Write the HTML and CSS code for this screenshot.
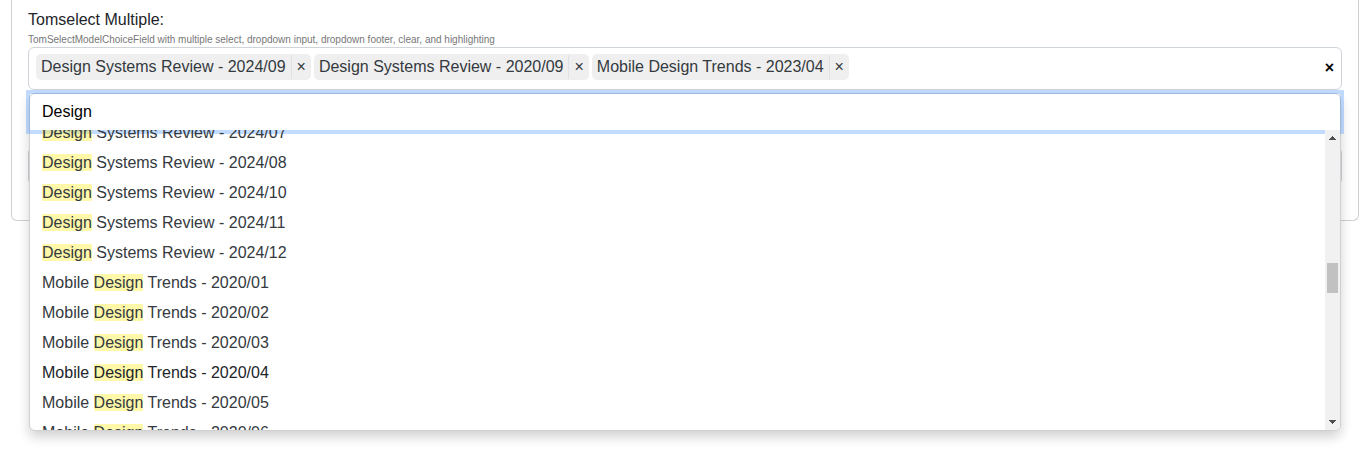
FILE: index.html
```
<!DOCTYPE html>
<html lang="en">
<head>
<meta charset="utf-8">
<title>Tomselect Multiple</title>
<link rel="stylesheet" href="styles.css">
</head>
<body>
<form class="card">
  <div class="field">
    <label class="label" for="search">Tomselect Multiple:</label>
    <div class="help">TomSelectModelChoiceField with multiple select, dropdown input, dropdown footer, clear, and highlighting</div>
    <div class="control">
      <div class="items">
        <div class="item"><span>Design Systems Review - 2024/09</span><button type="button" class="remove" aria-label="Remove">×</button></div>
        <div class="item"><span>Design Systems Review - 2020/09</span><button type="button" class="remove" aria-label="Remove">×</button></div>
        <div class="item"><span>Mobile Design Trends - 2023/04</span><button type="button" class="remove" aria-label="Remove">×</button></div>
      </div>
      <button type="button" class="clear" aria-label="Clear all">×</button>
      <div class="dropdown">
        <input class="search" id="search" type="text" value="Design">
        <div class="results">
          <ul class="options">
            <li class="option"><mark>Design</mark> Systems Review - 2024/07</li>
            <li class="option"><mark>Design</mark> Systems Review - 2024/08</li>
            <li class="option"><mark>Design</mark> Systems Review - 2024/10</li>
            <li class="option"><mark>Design</mark> Systems Review - 2024/11</li>
            <li class="option"><mark>Design</mark> Systems Review - 2024/12</li>
            <li class="option">Mobile <mark>Design</mark> Trends - 2020/01</li>
            <li class="option">Mobile <mark>Design</mark> Trends - 2020/02</li>
            <li class="option">Mobile <mark>Design</mark> Trends - 2020/03</li>
            <li class="option active">Mobile <mark>Design</mark> Trends - 2020/04</li>
            <li class="option">Mobile <mark>Design</mark> Trends - 2020/05</li>
            <li class="option">Mobile <mark>Design</mark> Trends - 2020/06</li>
          </ul>
          <div class="scrollbar">
            <svg class="arrow" viewBox="0 0 15 15"><path d="M4 10h7v-1h-1v-1h-1v-1h-1v-1h-1v1h-1v1h-1v1h-1z"/></svg>
            <div class="track"><div class="thumb"></div></div>
            <svg class="arrow" viewBox="0 0 15 15"><path d="M4 5h7v1h-1v1h-1v1h-1v1h-1v-1h-1v-1h-1v-1h-1z"/></svg>
          </div>
        </div>
      </div>
    </div>
  </div>
  <div class="next-control"></div>
</form>
</body>
</html>
```
FILE: styles.css
```
* { box-sizing: border-box; }

body {
  min-height: 100vh;
  margin: 0;
  background: #fff;
  color: #212529;
  font: 16px/24px "Liberation Sans", Arial, sans-serif;
}

button, input { font: inherit; }

.card {
  margin: 0 13px 0 11px;
  padding: 8px 16px 35px;
  border: 1px solid #ced0d2;
  border-top: 0;
  border-radius: 0 0 6px 6px;
}

.label { display: block; }

.help {
  color: #777;
  font-size: 10px;
  line-height: 15px;
}

.control {
  position: relative;
  display: flex;
  align-items: flex-end;
  justify-content: space-between;
  padding: 6px 7px 9px;
  border: 1px solid #ced4da;
  border-radius: 6px;
}

.items { display: flex; gap: 3px; }

.item {
  display: flex;
  align-items: center;
  height: 26px;
  padding-left: 5px;
  border-radius: 5px;
  background: #efefef;
  color: #343a40;
}

.remove {
  height: 24px;
  margin-left: 5px;
  padding: 0 5px;
  border: 0;
  border-left: 1px solid #dee2e6;
  background: none;
  color: inherit;
}

.clear {
  padding: 0;
  border: 0;
  background: none;
  color: #000;
  font-weight: 700;
  line-height: 24px;
}

.dropdown {
  position: absolute;
  top: calc(100% + 4px);
  left: 0;
  right: 0;
  z-index: 10;
  border: 1px solid #d0d0d0;
  border-radius: 6px;
  background: #fff;
  box-shadow: 0 6px 12px rgba(0, 0, 0, 0.18);
}

.search {
  display: block;
  width: 100%;
  height: 36px;
  padding: 0 12px;
  border: 0;
  outline: 0;
  background: transparent;
  color: #000;
  box-shadow: 0 0 0 4px rgba(13, 110, 253, 0.25);
}

.results {
  display: flex;
  height: 300px;
  overflow: hidden;
  border-radius: 0 0 5px 5px;
}

.options {
  flex: 1;
  margin: -12px 0 0;
  padding: 0;
  list-style: none;
}

.option {
  padding: 3px 12px;
  color: #343a40;
}

.option.active { color: #212529; }

mark {
  border-radius: 1px;
  background: rgba(255, 237, 40, 0.4);
  color: inherit;
}

.scrollbar {
  display: flex;
  flex-direction: column;
  width: 15px;
  background: #f1f1f1;
}

.arrow {
  width: 15px;
  height: 15px;
  fill: #505050;
}

.track {
  flex: 1;
  padding: 118px 2px 0;
}

.thumb {
  height: 30px;
  background: #c1c1c1;
}

.next-control {
  height: 38px;
  margin-top: 57px;
  border: 1px solid #ced4da;
  border-radius: 6px;
}
```
